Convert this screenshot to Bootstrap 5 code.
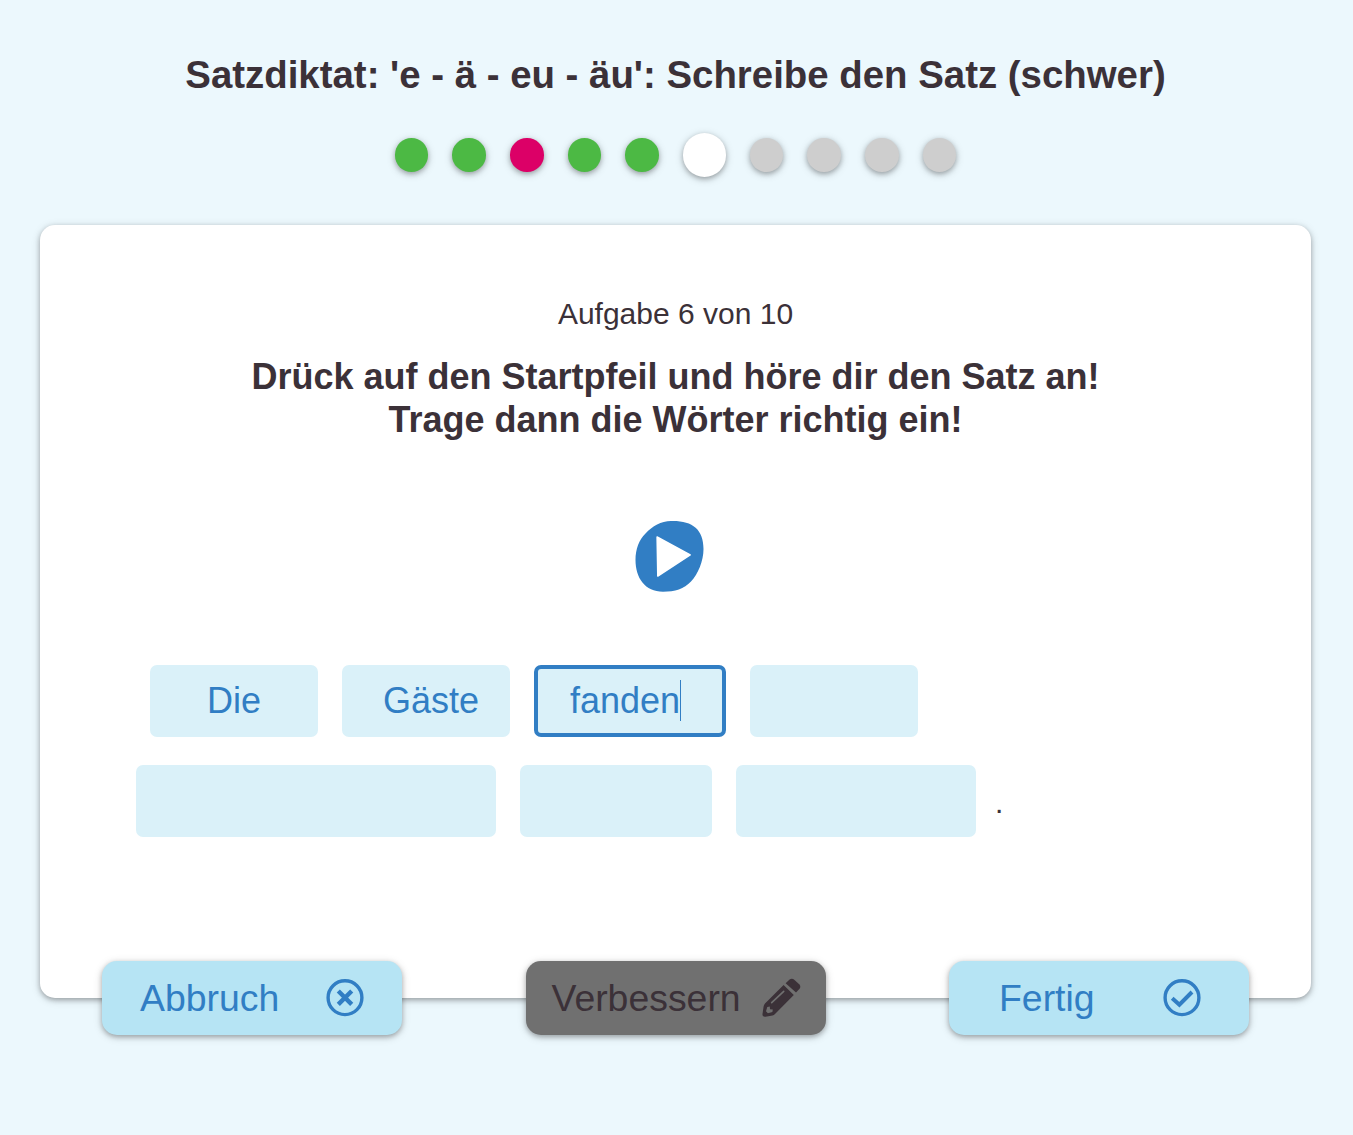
<!DOCTYPE html>
<html lang="de">
<head>
  <meta charset="UTF-8">
  <meta name="viewport" content="width=device-width, initial-scale=1">
  <title>Satzdiktat</title>
  <link href="https://cdn.jsdelivr.net/npm/bootstrap@5.3.0/dist/css/bootstrap.min.css" rel="stylesheet">
  <style>
    body {
      background: #ecf8fd;
      color: #3b3138;
      font-family: "Liberation Sans", Arial, sans-serif;
    }
    .page {
      min-height: 100vh;
      padding: 52px 42px 0 40px;
    }
    .quiz-title {
      font-size: 38.4px;
      line-height: 46px;
      font-weight: 700;
      margin-bottom: 35px;
    }
    .steps {
      gap: 24px;
      height: 44px;
      margin-bottom: 48px;
    }
    .step {
      width: 33.6px;
      height: 33.6px;
      background: #cecece;
      box-shadow: 0 2px 5px rgba(0, 0, 0, .26), 0 2px 10px rgba(0, 0, 0, .16);
    }
    .step-right { background: #4cb944; }
    .step-wrong { background: #dc0067; }
    .step-current {
      width: 43.2px;
      height: 43.2px;
      background: #fff;
    }
    .task {
      height: 773px;
      border: 0;
      border-radius: 15px;
      padding: 70px 96px 0;
      box-shadow: 0 2px 5px rgba(0, 0, 0, .26), 0 2px 10px rgba(0, 0, 0, .16);
    }
    .task-count {
      font-size: 30px;
      line-height: 38px;
      margin-bottom: 22px;
    }
    .task-text {
      font-size: 36px;
      line-height: 43px;
      font-weight: 700;
      margin-bottom: 79px;
    }
    .play {
      width: 70px;
      height: 72px;
      margin-right: 12px;
      margin-bottom: 73px;
    }
    .words {
      gap: 24px;
      margin-bottom: 28px;
    }
    .words-first { padding-left: 14px; }
    .word {
      width: 168px;
      height: 72px;
      border: 4px solid transparent;
      border-radius: 7px;
      background: #daf1f9;
      color: #317ec4;
      font-size: 36px;
      line-height: 40px;
    }
    .word-active {
      border-color: #317ec4;
    }
    .caret {
      width: 1px;
      height: 41px;
      margin-bottom: 2px;
      background: #317ec4;
    }
    .sentence-end {
      font-size: 30px;
      line-height: 40px;
      margin-left: -5px;
      padding-top: 3px;
    }
    .actions {
      padding: 0 62px;
      margin-top: -37px;
    }
    .action,
    .action:disabled {
      width: 300px;
      height: 74px;
      padding: 0;
      border: 0;
      border-radius: 15px;
      background: #b6e4f4;
      color: #317ec4;
      font-size: 37.4px;
      line-height: 46px;
      opacity: 1;
      box-shadow: 0 2px 5px rgba(0, 0, 0, .26), 0 2px 10px rgba(0, 0, 0, .16);
    }
    .action:disabled {
      background: #707070;
      color: #3b3138;
    }
    .action svg {
      width: 40px;
      height: 40px;
    }
  </style>
</head>
<body>
  <main class="page">
    <h1 class="quiz-title text-center">Satzdiktat: 'e - ä - eu - äu': Schreibe den Satz (schwer)</h1>

    <div class="steps d-flex justify-content-center align-items-center">
      <div class="step step-right rounded-circle"></div>
      <div class="step step-right rounded-circle"></div>
      <div class="step step-wrong rounded-circle"></div>
      <div class="step step-right rounded-circle"></div>
      <div class="step step-right rounded-circle"></div>
      <div class="step step-current rounded-circle"></div>
      <div class="step rounded-circle"></div>
      <div class="step rounded-circle"></div>
      <div class="step rounded-circle"></div>
      <div class="step rounded-circle"></div>
    </div>

    <div class="card task">
      <p class="task-count text-center">Aufgabe 6 von 10</p>
      <h2 class="task-text text-center">Drück auf den Startpfeil und höre dir den Satz an!<br>Trage dann die Wörter richtig ein!</h2>

      <button type="button" class="play btn p-0 border-0 align-self-center d-flex" aria-label="Abspielen">
        <svg width="70" height="72" viewBox="0 0 70 72">
          <path fill="#317ec4" d="M36 1C57 .4 68.500 9 68.500 29C68.500 41 63 54 56 61.500C49 69 40 71.700 28 71.700C10 71.700 .5 58 .5 40C.5 29 4 20 10.500 13.500C17.500 6 26 1.300 36 1Z"/>
          <path fill="#fff" stroke="#fff" stroke-width="1.5" stroke-linejoin="round" d="M22.100 17L55.200 34.800L22.800 56Z"/>
        </svg>
      </button>

      <div class="words words-first d-flex align-items-center">
        <div class="word d-flex justify-content-center align-items-center">Die</div>
        <div class="word d-flex justify-content-center align-items-center" style="padding-left: 10px">Gäste</div>
        <div class="word word-active d-flex align-items-center" style="width: 192px; padding-left: 32px">fanden<span class="caret"></span></div>
        <div class="word"></div>
      </div>
      <div class="words d-flex align-items-center">
        <div class="word" style="width: 360px"></div>
        <div class="word" style="width: 192px"></div>
        <div class="word" style="width: 240px"></div>
        <span class="sentence-end">.</span>
      </div>
    </div>

    <div class="actions d-flex justify-content-between position-relative">
      <button type="button" class="action btn d-flex align-items-center justify-content-between" style="padding: 0 37px 0 38px">
        <span>Abbruch</span>
        <svg viewBox="0 0 40 40" fill="none" stroke="currentColor">
          <circle cx="20" cy="19.7" r="16.9" stroke-width="3.4"/>
          <path stroke-width="4.4" d="M13.3 13L26.7 26.400M26.7 13L13.3 26.400"/>
        </svg>
      </button>
      <button type="button" class="action btn d-flex align-items-center justify-content-between" style="padding: 0 25px 0 26px" disabled>
        <span>Verbessern</span>
        <svg viewBox="0 0 40 40">
          <g fill="currentColor">
            <path d="M24.600 5.200L28.300 1.800Q31 -.2 33.500 2L38.200 6.300Q40.400 8.600 38.300 11L35 14.600Z"/>
            <path fill-rule="evenodd" d="M22.600 7L32.800 16.900L14 36Q13 37.200 11.500 37.500L4.500 38.700Q1.200 39 1.500 36L2.600 28.500Q2.800 27 4 25.600ZM6.300 29L5 33.300L6.900 35.200L11.400 34L11.800 31.600L9 31.300L8.800 28.600Z"/>
          </g>
          <path d="M10.700 24.700L22.700 13.300" stroke="#707070" stroke-width="1.6" stroke-linecap="round"/>
        </svg>
      </button>
      <button type="button" class="action btn d-flex align-items-center justify-content-between" style="padding: 0 47px 0 50px">
        <span>Fertig</span>
        <svg viewBox="0 0 40 40" fill="none" stroke="currentColor">
          <circle cx="20" cy="19.7" r="16.9" stroke-width="3.4"/>
          <path stroke-width="4" d="M10.2 20.200L17.400 26.700L30 14"/>
        </svg>
      </button>
    </div>
  </main>

  <script src="https://cdn.jsdelivr.net/npm/bootstrap@5.3.0/dist/js/bootstrap.bundle.min.js"></script>
</body>
</html>
